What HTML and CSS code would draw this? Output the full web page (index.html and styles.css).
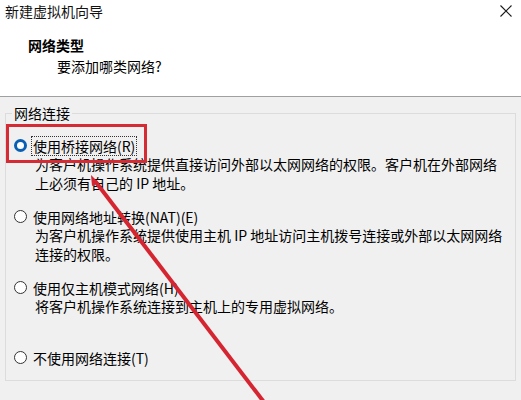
FILE: index.html
```html
<!DOCTYPE html>
<html lang="zh-CN">
<head>
<meta charset="utf-8">
<title>新建虚拟机向导</title>
<link rel="stylesheet" href="styles.css">
</head>
<body>
<div class="window">
  <header class="header">
    <div class="titlebar">
      <span class="title">新建虚拟机向导</span>
      <svg class="close" width="12" height="12" viewBox="0 0 12 12"><path d="M0.5 0.5 L11.5 11.5 M11.5 0.5 L0.5 11.5" stroke="#1a1a1a" stroke-width="1.1" fill="none"/></svg>
    </div>
    <div class="heading">网络类型</div>
    <div class="subheading">要添加哪类网络?</div>
  </header>
  <main class="main">
    <fieldset class="group">
      <legend class="legend">网络连接</legend>
      <div class="option opt1">
        <div class="row"><span class="radio checked"></span><span class="label focus">使用桥接网络(R)</span></div>
        <div class="desc">为客户机操作系统提供直接访问外部以太网网络的权限。客户机在外部网络<br>上必须有自己的 IP 地址。</div>
      </div>
      <div class="option opt2">
        <div class="row"><span class="radio"></span><span class="label">使用网络地址转换(NAT)(E)</span></div>
        <div class="desc">为客户机操作系统提供使用主机 IP 地址访问主机拨号连接或外部以太网网络<br>连接的权限。</div>
      </div>
      <div class="option opt3">
        <div class="row"><span class="radio"></span><span class="label">使用仅主机模式网络(H)</span></div>
        <div class="desc">将客户机操作系统连接到主机上的专用虚拟网络。</div>
      </div>
      <div class="option opt4">
        <div class="row"><span class="radio"></span><span class="label">不使用网络连接(T)</span></div>
      </div>
    </fieldset>
  </main>
  <div class="highlight"></div>
  <svg class="arrow" width="521" height="400" viewBox="0 0 521 400">
    <line x1="95" y1="181" x2="270" y2="410" stroke="#d42530" stroke-width="4"/>
    <polygon points="91,175 99,183 92,186" fill="#d42530"/>
  </svg>
</div>
</body>
</html>
```
FILE: styles.css
```css
html, body {
  margin: 0;
  padding: 0;
}
body {
  width: 521px;
  height: 400px;
  overflow: hidden;
  background: #f0f0f0;
  font-family: "Noto Sans CJK SC", "Microsoft YaHei", sans-serif;
  font-size: 14px;
  color: #000;
}
.window {
  position: relative;
  width: 521px;
  height: 400px;
}
.header {
  background: #fff;
  border-bottom: 1px solid #a0a0a0;
  box-sizing: border-box;
  height: 97px;
}
.titlebar {
  display: flex;
  justify-content: space-between;
  align-items: center;
  height: 22px;
  padding: 0 9px 0 5px;
}
.title {
  line-height: 22px;
  color: #111;
}
.close {
  display: block;
}
.heading {
  margin-top: 13px;
  padding-left: 28px;
  font-weight: bold;
  line-height: 20px;
}
.subheading {
  margin-top: 1px;
  padding-left: 57px;
  line-height: 20px;
}
.main {
  padding-top: 7px;
}
.group {
  margin: 0 5px;
  width: 511px;
  box-sizing: border-box;
  border: 1px solid #dcdcdc;
  padding: 13px 0 13px 8px;
  min-width: 0;
}
.legend {
  padding: 0 2px;
  margin-left: -2px;
  line-height: 19px;
}
.option {
  line-height: 19px;
  white-space: nowrap;
}
.opt2 { margin-top: 14px; }
.opt3 { margin-top: 14px; }
.opt4 { margin-top: 32px; }
.row {
  display: flex;
  align-items: center;
  height: 19px;
}
.radio {
  width: 13px;
  height: 13px;
  box-sizing: border-box;
  border-radius: 50%;
  border: 1px solid #333;
  background: #fff;
  margin-right: 5px;
  flex: none;
}
.radio.checked {
  border: 3px solid #0a5fb4;
  background: #fff;
}
.label {
  padding: 0 1px;
  line-height: 18px;
}
.label.focus {
  outline: 1px dotted #333;
}
.desc {
  padding-left: 21px;
}
.highlight {
  position: absolute;
  left: 6px;
  top: 124px;
  width: 141px;
  height: 39px;
  box-sizing: border-box;
  border: 3px solid #d42b35;
}
.arrow {
  position: absolute;
  left: 0;
  top: 0;
  pointer-events: none;
}
```
